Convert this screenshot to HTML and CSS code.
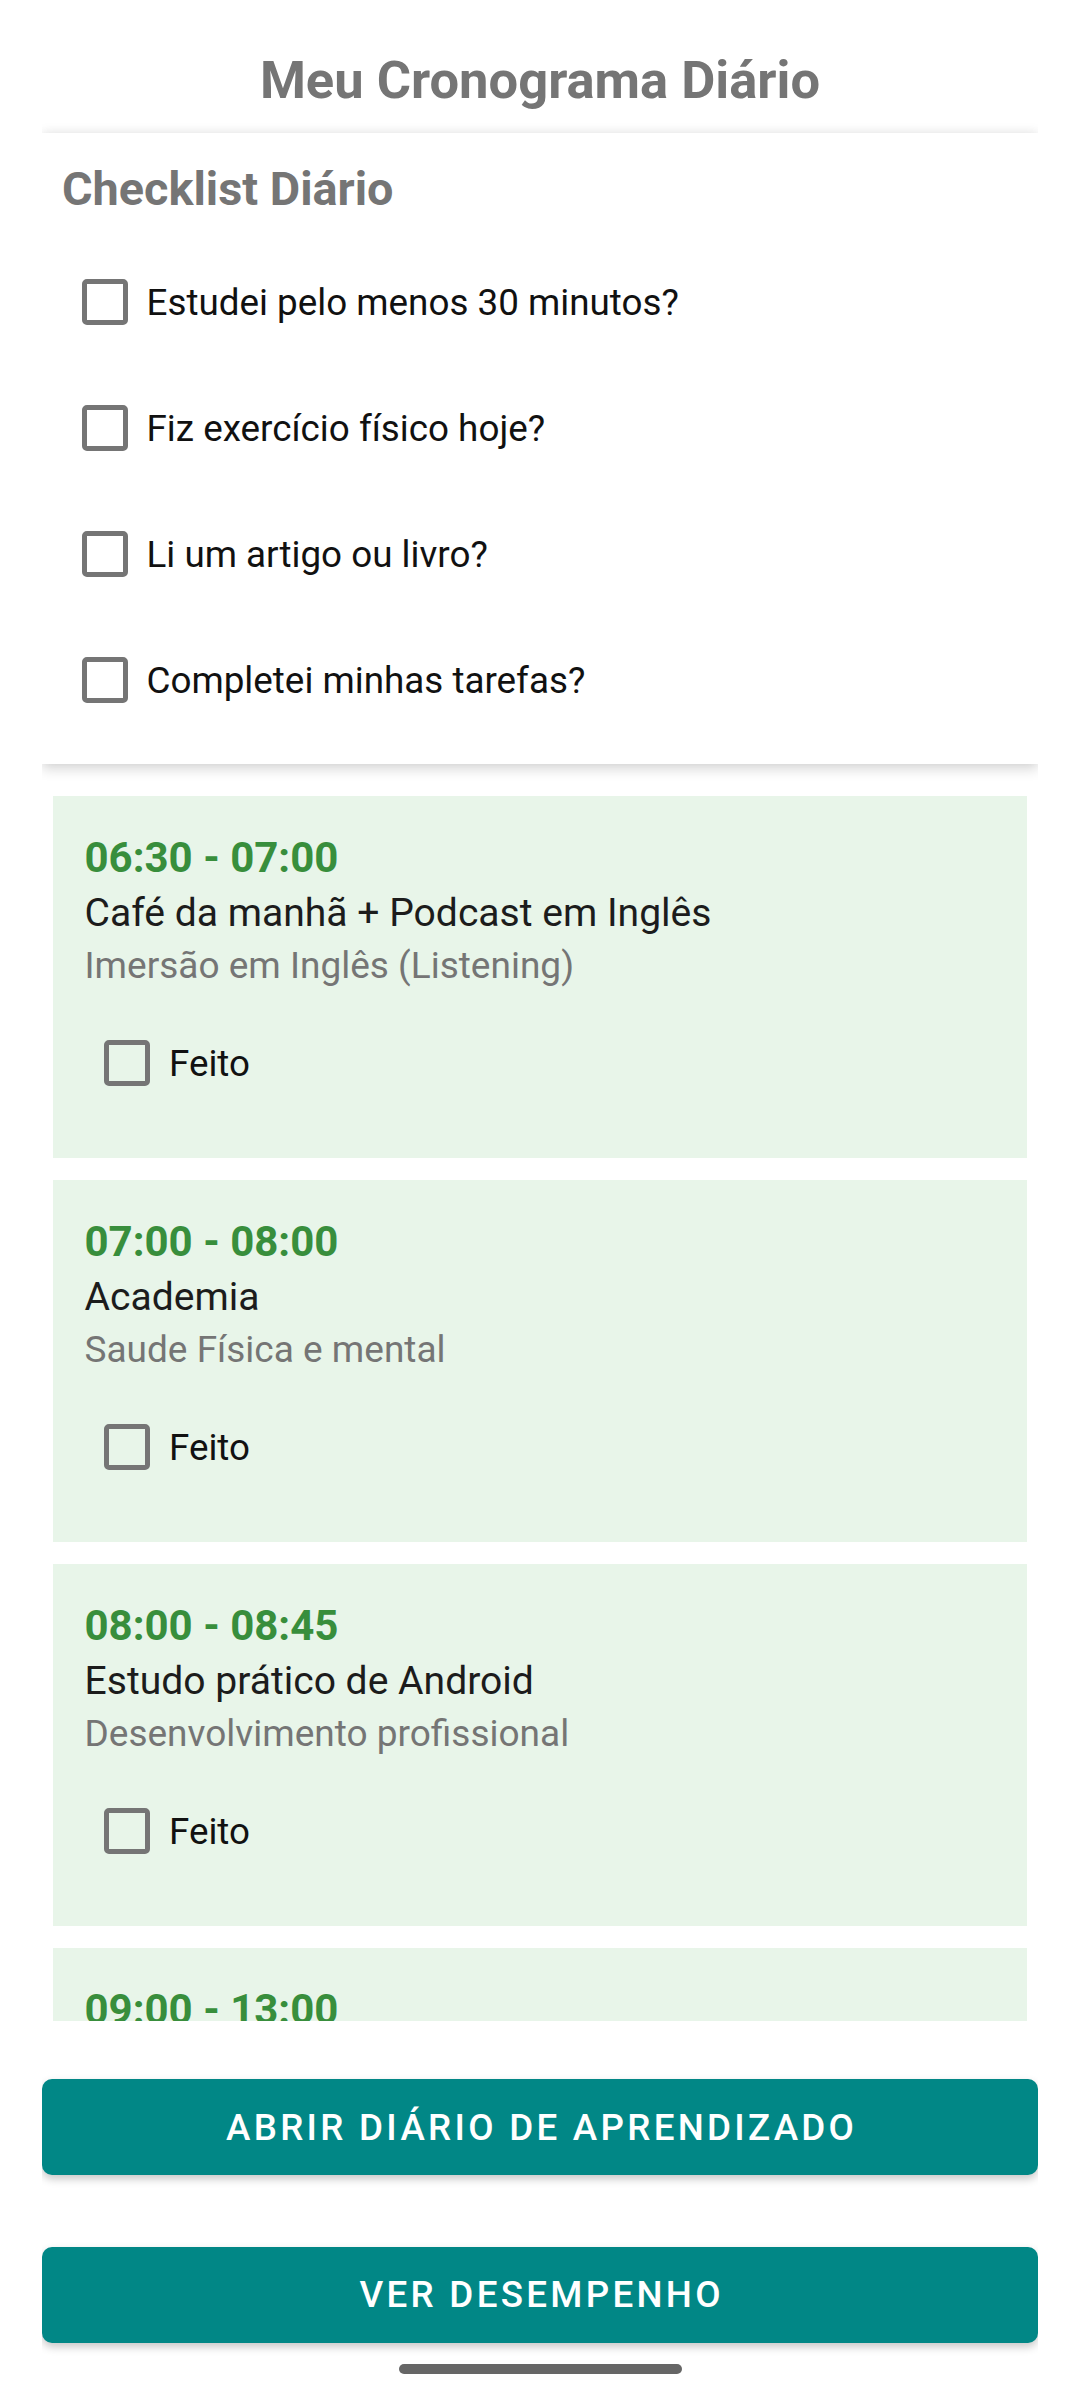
FILE: index.html
```html
<!DOCTYPE html>
<html lang="pt-BR">
<head>
<meta charset="utf-8">
<title>Meu Cronograma Diário</title>
<link rel="stylesheet" href="styles.css">
</head>
<body>
<div class="screen">
  <h1 class="app-title">Meu Cronograma Diário</h1>

  <section class="checklist">
    <h2 class="checklist-title">Checklist Diário</h2>
    <div class="check-list">
      <div class="check-row"><span class="box"></span><span>Estudei pelo menos 30 minutos?</span></div>
      <div class="check-row"><span class="box"></span><span>Fiz exercício físico hoje?</span></div>
      <div class="check-row"><span class="box"></span><span>Li um artigo ou livro?</span></div>
      <div class="check-row"><span class="box"></span><span>Completei minhas tarefas?</span></div>
    </div>
  </section>

  <div class="schedule">
    <div class="slot">
      <div class="slot-time">06:30 - 07:00</div>
      <div class="slot-title">Café da manhã + Podcast em Inglês</div>
      <div class="slot-desc">Imersão em Inglês (Listening)</div>
      <div class="done"><span class="box box-done"></span><span>Feito</span></div>
    </div>
    <div class="slot">
      <div class="slot-time">07:00 - 08:00</div>
      <div class="slot-title">Academia</div>
      <div class="slot-desc">Saude Física e mental</div>
      <div class="done"><span class="box box-done"></span><span>Feito</span></div>
    </div>
    <div class="slot">
      <div class="slot-time">08:00 - 08:45</div>
      <div class="slot-title">Estudo prático de Android</div>
      <div class="slot-desc">Desenvolvimento profissional</div>
      <div class="done"><span class="box box-done"></span><span>Feito</span></div>
    </div>
    <div class="slot slot-partial">
      <div class="slot-time">09:00 - 13:00</div>
    </div>
  </div>

  <div class="actions">
    <button class="btn">Abrir Diário de Aprendizado</button>
    <button class="btn btn-second">Ver Desempenho</button>
  </div>

  <div class="handle"></div>
</div>
</body>
</html>
```
FILE: styles.css
```css
* {
  box-sizing: border-box;
  margin: 0;
  padding: 0;
}

body {
  width: 1080px;
  height: 2400px;
  background: #ffffff;
  font-family: Roboto, "Noto Sans", sans-serif;
  overflow: hidden;
}

.screen {
  display: flex;
  flex-direction: column;
  height: 2400px;
  padding: 0 42px;
}

.app-title {
  padding-top: 49px;
  font-size: 52.5px;
  line-height: 62px;
  font-weight: 700;
  color: #757575;
  text-align: center;
}

.checklist {
  margin-top: 22px;
  background: #ffffff;
  padding: 28px 20px 21px 20px;
  box-shadow: 0 5px 12px rgba(0, 0, 0, 0.16), 0 -3px 10px rgba(0, 0, 0, 0.05);
  clip-path: inset(-30px 0 -40px 0);
}

.checklist-title {
  font-size: 46.8px;
  line-height: 56px;
  font-weight: 700;
  color: #757575;
}

.check-list {
  margin-top: 22px;
  display: flex;
  flex-direction: column;
}

.check-row {
  height: 126px;
  display: flex;
  align-items: center;
  padding-left: 20px;
  font-size: 36.8px;
  color: #111111;
}

.box {
  flex: none;
  width: 46px;
  height: 46px;
  border: 5px solid #757575;
  border-radius: 5px;
  margin-right: 18.5px;
}

.box-done {
  margin-right: 19px;
}

.schedule {
  margin-top: 21px;
  height: 1236px;
  flex: none;
  overflow: hidden;
  display: flex;
  flex-direction: column;
  gap: 22px;
  padding: 11px 11px 0 11px;
}

.slot {
  flex: none;
  background: #e8f5e9;
  padding: 37px 31.5px 32px 31.5px;
}

.slot-partial {
  min-height: 362px;
}

.slot-time {
  font-size: 42px;
  line-height: 50px;
  font-weight: 700;
  color: #388e3c;
}

.slot-title {
  margin-top: 7.3px;
  font-size: 39.1px;
  line-height: 46px;
  color: #1c1c1c;
}

.slot-desc {
  margin-top: 8px;
  font-size: 37px;
  line-height: 43px;
  color: #757575;
}

.done {
  margin-top: 12.8px;
  height: 126px;
  display: flex;
  align-items: center;
  padding-left: 19.5px;
  font-size: 36.75px;
  color: #111111;
}

.actions {
  margin-top: 58px;
  display: flex;
  flex-direction: column;
}

.btn {
  height: 96px;
  border: none;
  background: #018786;
  color: #ffffff;
  border-radius: 10px;
  font-family: Roboto, "Noto Sans", sans-serif;
  font-size: 36.75px;
  font-weight: 500;
  letter-spacing: 3.28px;
  padding-left: 3.28px;
  text-transform: uppercase;
  display: flex;
  align-items: center;
  justify-content: center;
  box-shadow: 0 4px 8px rgba(0, 0, 0, 0.22);
  clip-path: inset(-10px 0 -20px 0);
}

.btn-second {
  margin-top: 71.7px;
}

.handle {
  margin: 21.3px auto 0 auto;
  width: 283px;
  height: 10px;
  border-radius: 5px;
  background: #666666;
}
```
